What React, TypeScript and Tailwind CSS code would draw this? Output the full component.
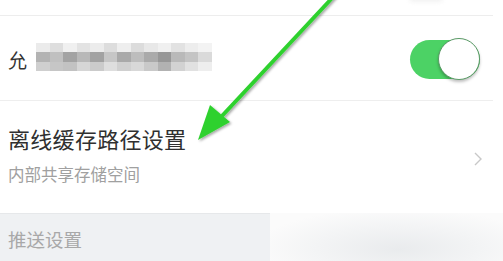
import React from "react";

const blocks: string[][] = [
  ["#ebebeb", "#dedede", "#f0f0f0", "#e3e3e3", "#ececec", "#dddddd", "#eeeeee", "#dcdcdc", "#e8e8e8", "#f0f0f0", "#e2e2e2", "#ededed", "#f3f3f3"],
  ["#b3b3b3", "#c0c0c0", "#a3a3a3", "#b8b8b8", "#a2a2a2", "#c6c6c6", "#a9a9a9", "#bdbdbd", "#aaaaaa", "#979797", "#b9b9b9", "#c4c4c4", "#dadada"],
  ["#cfcfcf", "#c6c6c6", "#c2c2c2", "#d6d6d6", "#cbcbcb", "#dedede", "#d0d0d0", "#d8d8d8", "#c9c9c9", "#b2b2b2", "#d2d2d2", "#e1e1e1", "#eeeeee"],
];

function Pixelated() {
  return (
    <div className="flex flex-col ml-[9px] mt-[-2px]">
      {blocks.map((row, i) => (
        <div key={i} className="flex">
          {row.map((c, j) => (
            <div key={j} className="w-[13.5px] h-[9.5px]" style={{ backgroundColor: c }} />
          ))}
        </div>
      ))}
    </div>
  );
}

export default function App() {
  return (
    <div
      className="relative w-[503px] h-[261px] overflow-hidden bg-white flex flex-col"
      style={{ fontFamily: '"Noto Sans CJK SC", "Noto Sans", sans-serif' }}
    >
      {/* top remnant row */}
      <div className="h-[16px] shrink-0 border-b border-[#ededed] mr-[10px] flex justify-end">
        <div className="mr-[50px] mt-[-6px] w-[34px] h-[8px] rounded-full bg-[#f2f2f2] blur-[2px]" />
      </div>

      {/* row 1 */}
      <div className="h-[85px] shrink-0 border-b border-[#eeeeee] mr-[10px] flex items-center pl-[8px] pr-[13px]">
        <span className="text-[19px] text-[#333333] leading-none mt-[2px]">允</span>
        <Pixelated />
        <div className="ml-auto relative w-[70px] h-[42px] mt-[2px] flex items-center">
          <div className="w-[70px] h-[39px] rounded-full bg-[#4cd265]" />
          <div className="absolute right-0 top-0 w-[42px] h-[42px] rounded-full bg-white border-[1.5px] border-[#5a9a66] shadow-[0_2px_3px_rgba(0,0,0,0.25)]" />
        </div>
      </div>

      {/* row 2 */}
      <div className="h-[112px] shrink-0 flex items-center pl-[8px] pr-[20px]">
        <div className="flex flex-col mt-[-4px]">
          <span className="text-[22px] text-[#303030] leading-none tracking-[0.3px]">离线缓存路径设置</span>
          <span className="text-[16.5px] text-[#a0a0a0] leading-none mt-[17px]">内部共享存储空间</span>
        </div>
        <svg className="ml-auto mt-[4px]" width="10" height="16" viewBox="0 0 10 16">
          <path d="M2 2 L8 8 L2 14" fill="none" stroke="#c8c8c8" strokeWidth="1.4" />
        </svg>
      </div>

      {/* section header */}
      <div className="flex-1 flex">
        <div className="w-[270px] bg-[#eff1f3] border-t border-[#e6e8ea] flex items-center pl-[8px]">
          <span className="text-[18.5px] text-[#a8a8a8] leading-none mt-[4px]">推送设置</span>
        </div>
        <div className="flex-1 bg-[radial-gradient(ellipse_at_55%_75%,#e9ebed_0%,#f3f4f5_45%,#fbfbfb_80%)]" />
      </div>

      {/* green annotation arrow */}
      <svg className="absolute inset-0 pointer-events-none" width="503" height="261" viewBox="0 0 503 261">
        <defs>
          <filter id="sh" x="-20%" y="-20%" width="140%" height="140%">
            <feDropShadow dx="1.5" dy="1.5" stdDeviation="1.2" floodColor="#000" floodOpacity="0.35" />
          </filter>
        </defs>
        <g filter="url(#sh)">
          <line x1="334" y1="-4" x2="221" y2="117" stroke="#2fd12f" strokeWidth="4" strokeLinecap="round" />
          <polygon points="198,140 210,105 230,122" fill="#2fd12f" />
        </g>
      </svg>
    </div>
  );
}
